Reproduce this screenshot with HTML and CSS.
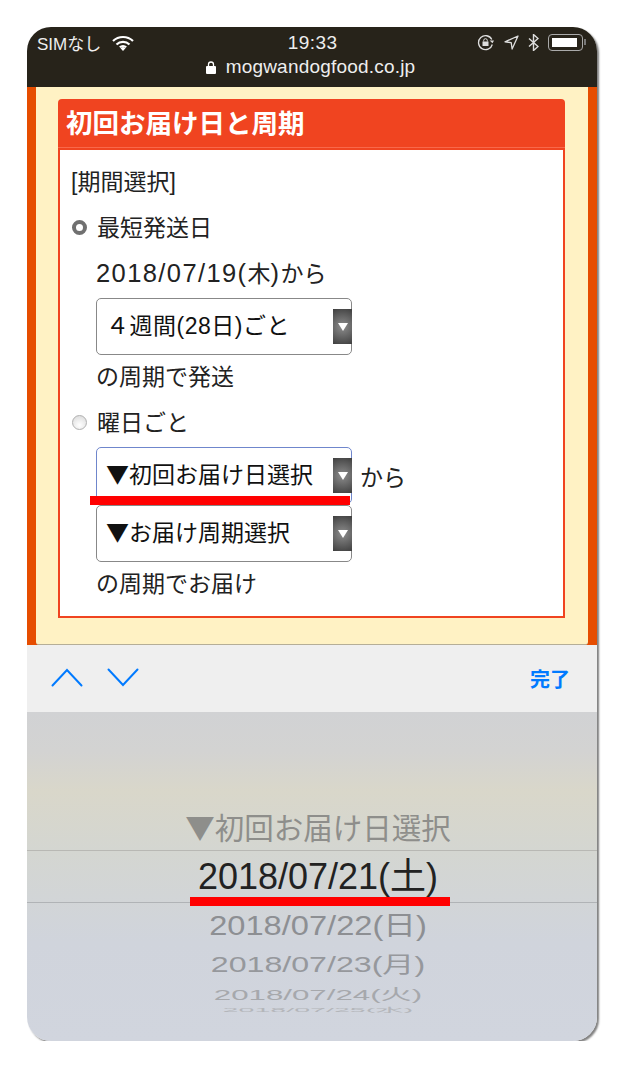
FILE: index.html
```html
<!DOCTYPE html>
<html lang="ja">
<head>
  <meta charset="UTF-8" />
  <meta name="viewport" content="width=device-width, initial-scale=1.0"/>
  <title>初回お届け日と周期</title>
  <link rel="stylesheet" href="styles.css">
</head>
<body>
  <div class="phone">
    <div class="topbar">
      <div class="status">
        <div class="status-left">
          <span>SIMなし</span>
          <svg class="wifi" width="22" height="16" viewBox="0 0 22 16">
            <path d="M1 6a14.500 14.500 0 0 1 20 0M4.500 9.500a9.500 9.500 0 0 1 13 0M7.800 12.300a4.800 4.800 0 0 1 6.400 0" fill="none" stroke="#fff" stroke-width="2.200"/>
            <path d="M11 16l-2.500-2.700a3.600 3.600 0 0 1 5 0z" fill="#fff"/>
          </svg>
        </div>
        <span class="clock">19:33</span>
        <div class="status-right">
          <svg width="18" height="17" viewBox="0 0 18 17">
            <path d="M15.300 10.500a7 7 0 1 1-.5-5" fill="none" stroke="#ddd" stroke-width="1.300"/>
            <path d="M12.600 6.500h4.400l-1.500 2.800z" fill="#ddd"/>
            <rect x="5.500" y="7.500" width="6" height="4.500" fill="#ddd"/>
            <path d="M6.700 7.500v-1a1.800 1.800 0 0 1 3.600 0v1" fill="none" stroke="#ddd" stroke-width="1"/>
          </svg>
          <svg width="15" height="15" viewBox="0 0 15 15">
            <path d="M14 1L1 6.800l6.200.9.900 6.300z" fill="none" stroke="#ddd" stroke-width="1.300" stroke-linejoin="round"/>
          </svg>
          <svg width="11" height="17" viewBox="0 0 11 17">
            <path d="M1 4.500l9 8-4.500 4V.5l4.500 4-9 8" fill="none" stroke="#ddd" stroke-width="1.400"/>
          </svg>
          <div class="battery"><div class="battery-level"></div></div>
        </div>
      </div>
      <div class="url">
        <svg width="10" height="13" viewBox="0 0 10 13">
          <rect x="0" y="5" width="10" height="8" rx="1" fill="#fff"/>
          <path d="M2.500 5V3.500a2.500 2.500 0 0 1 5 0V5" fill="none" stroke="#fff" stroke-width="1.300"/>
        </svg>
        <span>mogwandogfood.co.jp</span>
      </div>
    </div>

    <div class="page">
      <div class="cream">
        <div class="panel">
          <h2 class="panel-head">初回お届け日と周期</h2>
          <div class="panel-body">
            <div class="row">[期間選択]</div>
            <div class="row radio-row"><span class="radio radio-on"></span>最短発送日</div>
            <div class="row indent"><span><span class="latin">2018/07/19(</span>木<span class="latin">)</span>から</span></div>
            <div class="select-row">
              <div class="select select-wide">４週間(28日)ごと<span class="arrow"></span></div>
            </div>
            <div class="row indent">の周期で発送</div>
            <div class="row radio-row"><span class="radio"></span>曜日ごと</div>
            <div class="select-row">
              <div class="select select-focus"><span class="tri">▼</span>初回お届け日選択<span class="arrow"></span></div>
              <span class="select-after">から</span>
            </div>
            <div class="select-row select-gap">
              <div class="select"><span class="tri">▼</span>お届け周期選択<span class="arrow"></span></div>
            </div>
            <div class="row indent">の周期でお届け</div>
          </div>
        </div>
      </div>
      <div class="mark mark-select"></div>
    </div>

    <div class="accessory">
      <div class="nav-arrows">
        <svg width="32" height="19" viewBox="0 0 32 19">
          <path d="M1.500 17.500L16 2l14.500 15.500" fill="none" stroke="#007aff" stroke-width="2" stroke-linecap="round"/>
        </svg>
        <svg width="32" height="19" viewBox="0 0 32 19">
          <path d="M1.500 1.500L16 17 30.500 1.500" fill="none" stroke="#007aff" stroke-width="2" stroke-linecap="round"/>
        </svg>
      </div>
      <span class="done">完了</span>
    </div>

    <div class="picker">
      <div class="wheel">
        <div class="wheel-item item-prev"><span class="tri">▼</span>初回お届け日選択</div>
        <div class="wheel-item item-current">2018/07/21(土)</div>
        <div class="wheel-item item-next1">2018/07/22(日)</div>
        <div class="wheel-item item-next2">2018/07/23(月)</div>
        <div class="wheel-item item-next3">2018/07/24(火)</div>
        <div class="wheel-item item-next4">2018/07/25(水)</div>
      </div>
      <div class="mark mark-picker"></div>
    </div>
  </div>
</body>
</html>
```

FILE: styles.css
```css
body {
  margin: 0;
  background: #fff;
  font-family: "Liberation Sans", "Noto Sans CJK JP", sans-serif;
  color: #222;
}

.phone {
  width: 570px;
  height: 1014px;
  margin: 27px 0 0 27px;
  border-radius: 24px;
  overflow: hidden;
  box-shadow: 2px 2px 2px #808080;
  display: flex;
  flex-direction: column;
}

.tri {
  font-family: "Noto Sans CJK JP", sans-serif;
  line-height: 1;
}

/* status bar + address */
.topbar {
  height: 60px;
  background: #27231a;
  color: #eee;
  box-sizing: border-box;
  padding: 6px 11px 0 10px;
}

.status {
  display: flex;
  justify-content: space-between;
  align-items: center;
  height: 19px;
  font-size: 17px;
}

.status-left {
  display: flex;
  align-items: center;
  gap: 11px;
}

.clock {
  font-size: 19px;
  letter-spacing: 0.4px;
  margin-left: 14px;
}

.status-right {
  display: flex;
  align-items: center;
  gap: 9px;
}

.battery {
  position: relative;
  width: 35px;
  height: 17px;
  border: 1px solid #aaa;
  border-radius: 4px;
  padding: 3px;
  box-sizing: border-box;
  margin-right: 3px;
}

.battery::after {
  content: "";
  position: absolute;
  right: -4px;
  top: 4px;
  width: 2px;
  height: 6px;
  background: #777;
}

.battery-level {
  width: 25px;
  height: 9px;
  background: #fff;
}

.url {
  display: flex;
  justify-content: center;
  align-items: center;
  gap: 10px;
  height: 24px;
  margin-top: 3px;
  font-size: 19px;
  letter-spacing: 0.2px;
  padding-right: 2px;
}

/* page */
.page {
  position: relative;
  height: 558px;
  background: #e64d00;
  padding: 0 9px;
}

.cream {
  height: 558px;
  background: #fff2c4;
  border-bottom: 1px solid #b5ae97;
  box-sizing: border-box;
  padding: 12px 0 0 22px;
  border-radius: 0 0 3px 3px;
}

.panel {
  width: 507px;
}

.panel-head {
  margin: 0;
  height: 49px;
  box-sizing: border-box;
  line-height: 50px;
  background: #f04420;
  border-bottom: 1px solid #f9684a;
  color: #fff;
  font-size: 26.500px;
  font-weight: bold;
  padding-left: 8px;
  border-radius: 4px 4px 0 0;
}

.panel-body {
  border: 2px solid #f04420;
  background: #fff;
  padding: 10px 0 8px 11px;
  font-size: 23px;
}

.row {
  height: 46px;
  box-sizing: border-box;
  padding-bottom: 6px;
  display: flex;
  align-items: center;
}

.indent {
  padding-left: 25px;
}

.latin {
  font-size: 25.500px;
  letter-spacing: 1.400px;
}

.radio-row {
  gap: 10px;
}

.radio {
  width: 15px;
  height: 15px;
  margin: 2px 0 0 1px;
  border-radius: 50%;
  box-sizing: border-box;
  border: 1px solid #b0b0b0;
  background: radial-gradient(circle at 50% 70%, #fff, #d8d8d8);
}

.radio-on {
  border: 4px solid #707070;
  background: #fff;
}

.select-row {
  display: flex;
  align-items: center;
  padding-left: 25px;
}

.select-gap {
  margin-top: 1px;
}

.select {
  position: relative;
  width: 256px;
  height: 57px;
  line-height: 55px;
  box-sizing: border-box;
  border: 1px solid #888;
  border-radius: 5px;
  background: #fff;
  padding-left: 9px;
  font-size: 23px;
  color: #111;
}

.select-wide {
  letter-spacing: 0.500px;
}

.select-focus {
  border-color: #6f86cc;
}

.arrow {
  position: absolute;
  right: -1px;
  top: 10px;
  width: 19px;
  height: 35px;
  background: radial-gradient(circle, #8d8d8d, #3f3f3f);
}

.arrow::after {
  content: "";
  position: absolute;
  left: 5px;
  top: 14px;
  border-left: 5px solid transparent;
  border-right: 5px solid transparent;
  border-top: 8px solid #fff;
}

.select-after {
  margin-left: 8px;
  color: #222;
}

.mark {
  position: absolute;
  background: #ff0000;
}

.mark-select {
  left: 63px;
  top: 409px;
  width: 260px;
  height: 9px;
}

/* keyboard accessory */
.accessory {
  height: 67px;
  background: #efefef;
  box-sizing: border-box;
  display: flex;
  justify-content: space-between;
  align-items: center;
  padding: 0 27px 0 24px;
}

.nav-arrows {
  display: flex;
  gap: 24px;
  margin-top: -2px;
}

.done {
  color: #007aff;
  font-size: 20px;
  font-weight: bold;
}

/* date wheel */
.picker {
  position: relative;
  flex: 1;
  background: linear-gradient(180deg, #d1d2d4 0%, #d3d3d2 12%, #d9d7ca 24%, #d4d6d1 42%, #d0d4dc 70%, #d1d5de 100%);
}

.wheel {
  padding: 94px 0 0 12px;
  text-align: center;
}

.wheel-item {
  color: #8e8e8b;
  white-space: nowrap;
}

.item-prev {
  height: 44px;
  line-height: 45px;
  font-size: 29.500px;
}

.item-current {
  height: 53px;
  line-height: 52px;
  font-size: 36px;
  color: #222;
  border-top: 1px solid #b8b8b4;
  border-bottom: 1px solid #b0b3b6;
  box-sizing: border-box;
  margin-left: -12px;
  padding-left: 12px;
}

.item-next1 {
  height: 45px;
  line-height: 45px;
  font-size: 29px;
  color: #8d8f93;
  transform: scaleX(1.125) scaleY(0.96);
}

.item-next2 {
  height: 34px;
  line-height: 34px;
  font-size: 27px;
  color: #96989c;
  transform: scaleX(1.190) scaleY(0.8);
}

.item-next3 {
  height: 24px;
  line-height: 24px;
  font-size: 25px;
  color: #a6a8ac;
  transform: scaleX(1.250) scaleY(0.62);
}

.item-next4 {
  height: 8px;
  line-height: 8px;
  font-size: 22px;
  color: #b4b6ba;
  transform: scaleX(1.300) scaleY(0.25);
}

.mark-picker {
  left: 163px;
  top: 185px;
  width: 260px;
  height: 9px;
}
```
